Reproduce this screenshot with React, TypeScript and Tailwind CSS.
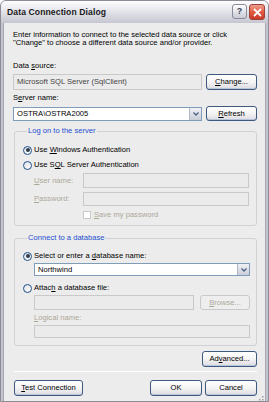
import React from "react";

const U = ({ c }: { c: string }) => <span className="underline">{c}</span>;

function Btn({ children, w, disabled }: { children: React.ReactNode; w: string; disabled?: boolean }) {
  return (
    <div
      className={`${w} h-full flex items-center justify-center rounded-[3px] border ${
        disabled
          ? "border-[#C9C9C9] bg-[#EEEEEE] text-[#ACA899]"
          : "border-[#3E5A80] bg-gradient-to-b from-white via-[#F4F4F4] to-[#DCDCE2] text-black shadow-[inset_0_-1px_0_#B8C4D8]"
      }`}
    >
      <span className="leading-none">{children}</span>
    </div>
  );
}

function Radio({ checked }: { checked?: boolean }) {
  return (
    <div className="w-[9px] h-[9px] rounded-full border border-[#1C4F8C] bg-gradient-to-br from-[#E0E0E6] to-white flex items-center justify-center shrink-0">
      {checked && <div className="w-[4px] h-[4px] rounded-full bg-[#2F3A4A]" />}
    </div>
  );
}

function Arrow() {
  return (
    <div className="w-[12px] h-full border-l border-[#B0B8C8] bg-gradient-to-b from-[#F2F2F6] to-[#C9CDD8] flex items-center justify-center">
      <svg width="6" height="4" viewBox="0 0 6 4">
        <path d="M0.5 0.5 L3 3 L5.5 0.5" fill="none" stroke="#4D6185" strokeWidth="1.3" />
      </svg>
    </div>
  );
}

export default function App() {
  return (
    <div className="w-[269px] h-[402px] bg-white font-['Liberation_Sans',Arial,sans-serif] text-[7.6px] text-black">
      <div className="w-full h-full flex flex-col rounded-t-[6px] border border-[#8C8C96] bg-[#C3C3CE] overflow-hidden">
        {/* Title bar */}
        <div className="h-[22px] shrink-0 flex items-center pl-[6px] pr-[3px] bg-gradient-to-b from-[#FEFEFF] via-[#E2E2E9] to-[#C6C6D1]">
          <span className="font-bold text-[8.6px] text-[#1A1A1A] tracking-[0.1px]">Data Connection Dialog</span>
          <div className="ml-auto flex gap-[2px]">
            <div className="w-[15px] h-[15px] rounded-[3px] border border-[#8A8A98] bg-gradient-to-b from-white to-[#C8CAD4] flex items-center justify-center">
              <span className="font-bold text-[9px] leading-none text-[#3A3F55]">?</span>
            </div>
            <div className="w-[16px] h-[16px] rounded-[3px] border border-[#A0403A] bg-gradient-to-b from-[#F0A090] via-[#E05A40] to-[#C83A28] flex items-center justify-center">
              <svg width="9" height="9" viewBox="0 0 9 9">
                <path d="M1.5 1.5 L7.5 7.5 M7.5 1.5 L1.5 7.5" stroke="white" strokeWidth="1.8" strokeLinecap="round" />
              </svg>
            </div>
          </div>
        </div>

        {/* Body */}
        <div className="flex-1 mx-[2px] mb-[3px] border-x border-b border-[#A8A8B4] bg-[#ECECEC] flex flex-col pl-[9px] pr-[8px]">
          <div className="mt-[8px] leading-[8px]">
            Enter information to connect to the selected data source or click
            <br />
            "Change" to choose a different data source and/or provider.
          </div>

          <div className="mt-[15px] leading-[8px]">
            Data <U c="s" />ource:
          </div>
          <div className="mt-[4px] h-[16px] flex gap-[4px]">
            <div className="flex-1 h-full border border-[#C9C9C9] bg-[#EBEBEB] flex items-center pl-[3px] text-[#444]">
              Microsoft SQL Server (SqlClient)
            </div>
            <Btn w="w-[51px]">
              <U c="C" />hange...
            </Btn>
          </div>

          <div className="mt-[4px] leading-[8px]">
            S<U c="e" />rver name:
          </div>
          <div className="mt-[4px] h-[15px] flex gap-[4px] items-center">
            <div className="flex-1 h-[14px] border border-[#7F9DB9] bg-white flex items-center">
              <span className="flex-1 pl-[3px]">OSTRA\OSTRA2005</span>
              <Arrow />
            </div>
            <Btn w="w-[51px]">
              <U c="R" />efresh
            </Btn>
          </div>

          {/* Group 1 */}
          <fieldset className="mt-[6px] ml-[1px] border border-[#D0D0D6] rounded-[3px] pl-[8px] pr-[7px] pb-[5px]">
            <legend className="ml-[4px] px-[1px] leading-[8px] text-[#1F4FD0]">Log on to the server</legend>
            <div className="mt-[10px] h-[10px] flex items-center gap-[2px]">
              <Radio checked />
              <span>
                Use <U c="W" />indows Authentication
              </span>
            </div>
            <div className="mt-[5px] h-[10px] flex items-center gap-[2px]">
              <Radio />
              <span>
                Use S<U c="Q" />L Server Authentication
              </span>
            </div>
            <div className="mt-[3px] h-[15px] flex items-center">
              <span className="ml-[11px] w-[49px] text-[#ACA899]">
                <U c="U" />ser name:
              </span>
              <div className="flex-1 h-full border border-[#C9C9C9] bg-[#EBEBEB]" />
            </div>
            <div className="mt-[4px] h-[14px] flex items-center">
              <span className="ml-[11px] w-[49px] text-[#ACA899]">
                <U c="P" />assword:
              </span>
              <div className="flex-1 h-full border border-[#C9C9C9] bg-[#EBEBEB]" />
            </div>
            <div className="mt-[4px] h-[10px] flex items-center pl-[60px] gap-[3px]">
              <div className="w-[8px] h-[8px] border border-[#C9C9C9] bg-white" />
              <span className="text-[#ACA899]">
                <U c="S" />ave my password
              </span>
            </div>
          </fieldset>

          {/* Group 2 */}
          <fieldset className="mt-[8px] ml-[1px] border border-[#D0D0D6] rounded-[3px] pl-[8px] pr-[6px] pb-[7px]">
            <legend className="ml-[4px] px-[1px] leading-[8px] text-[#1F4FD0]">Connect to a database</legend>
            <div className="mt-[9px] h-[10px] flex items-center gap-[2px]">
              <Radio checked />
              <span>
                Select or enter a <U c="d" />atabase name:
              </span>
            </div>
            <div className="mt-[2px] ml-[11px] h-[13px] border border-[#7F9DB9] bg-white flex items-center">
              <span className="flex-1 pl-[3px]">Northwind</span>
              <Arrow />
            </div>
            <div className="mt-[7px] h-[10px] flex items-center gap-[2px]">
              <Radio />
              <span>
                Attac<U c="h" /> a database file:
              </span>
            </div>
            <div className="mt-[2px] ml-[11px] h-[15px] flex gap-[6px]">
              <div className="flex-1 h-full border border-[#C9C9C9] bg-[#EBEBEB]" />
              <Btn w="w-[50px]" disabled>
                <U c="B" />rowse...
              </Btn>
            </div>
            <div className="mt-[4px] ml-[11px] leading-[8px] text-[#ACA899]">
              <U c="L" />ogical name:
            </div>
            <div className="mt-[3px] ml-[11px] h-[13px] border border-[#C9C9C9] bg-[#EBEBEB]" />
          </fieldset>

          <div className="mt-[5px] h-[16px] flex justify-end">
            <Btn w="w-[55px]">
              Ad<U c="v" />anced...
            </Btn>
          </div>

          <div className="mt-[4px] ml-[1px] h-px bg-[#C8C8CE] border-b border-white" />

          <div className="mt-[8px] h-[16px] flex">
            <div className="ml-[1px] h-full">
              <Btn w="w-[69px]">
                <U c="T" />est Connection
              </Btn>
            </div>
            <div className="ml-auto flex gap-[3px] h-full">
              <Btn w="w-[52px]">OK</Btn>
              <Btn w="w-[52px]">Cancel</Btn>
            </div>
          </div>

          <div className="flex-1 flex items-end justify-end -mr-[7px]">
            <svg width="8" height="8" viewBox="0 0 8 8">
              {[
                [6, 6], [3, 6], [0, 6], [6, 3], [3, 3], [6, 0],
              ].map(([x, y], i) => (
                <rect key={i} x={x} y={y} width="1.5" height="1.5" fill="#A0A0A8" />
              ))}
            </svg>
          </div>
        </div>
      </div>
    </div>
  );
}
